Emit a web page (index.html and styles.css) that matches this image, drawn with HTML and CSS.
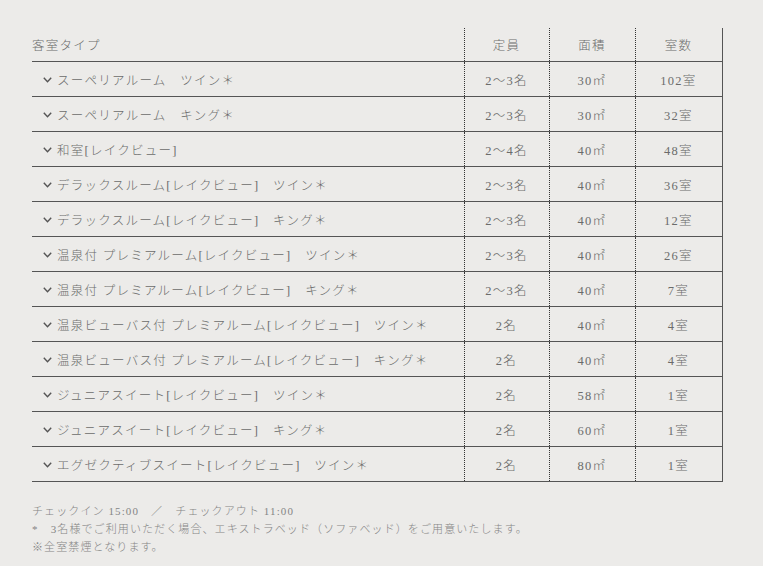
FILE: index.html
```html
<!DOCTYPE html>
<html lang="ja">
<head>
<meta charset="utf-8">
<link rel="stylesheet" href="styles.css">
</head>
<body>
<div class="wrap">
<table class="rooms">
  <colgroup>
    <col class="c-type"><col class="c-cap"><col class="c-area"><col class="c-num">
  </colgroup>
  <thead>
    <tr><th class="th-type">客室タイプ</th><th>定員</th><th>面積</th><th>室数</th></tr>
  </thead>
  <tbody>
    <tr><td class="type"><span class="chev"><svg viewBox="0 0 9 6" width="9" height="6"><path d="M0.8 0.8 L4.5 4.8 L8.2 0.8" fill="none" stroke="#555" stroke-width="1.4"/></svg></span>スーペリアルーム　ツイン＊</td><td>2〜3名</td><td>30㎡</td><td>102室</td></tr>
    <tr><td class="type"><span class="chev"><svg viewBox="0 0 9 6" width="9" height="6"><path d="M0.8 0.8 L4.5 4.8 L8.2 0.8" fill="none" stroke="#555" stroke-width="1.4"/></svg></span>スーペリアルーム　キング＊</td><td>2〜3名</td><td>30㎡</td><td>32室</td></tr>
    <tr><td class="type"><span class="chev"><svg viewBox="0 0 9 6" width="9" height="6"><path d="M0.8 0.8 L4.5 4.8 L8.2 0.8" fill="none" stroke="#555" stroke-width="1.4"/></svg></span>和室[レイクビュー]</td><td>2〜4名</td><td>40㎡</td><td>48室</td></tr>
    <tr><td class="type"><span class="chev"><svg viewBox="0 0 9 6" width="9" height="6"><path d="M0.8 0.8 L4.5 4.8 L8.2 0.8" fill="none" stroke="#555" stroke-width="1.4"/></svg></span>デラックスルーム[レイクビュー]　ツイン＊</td><td>2〜3名</td><td>40㎡</td><td>36室</td></tr>
    <tr><td class="type"><span class="chev"><svg viewBox="0 0 9 6" width="9" height="6"><path d="M0.8 0.8 L4.5 4.8 L8.2 0.8" fill="none" stroke="#555" stroke-width="1.4"/></svg></span>デラックスルーム[レイクビュー]　キング＊</td><td>2〜3名</td><td>40㎡</td><td>12室</td></tr>
    <tr><td class="type"><span class="chev"><svg viewBox="0 0 9 6" width="9" height="6"><path d="M0.8 0.8 L4.5 4.8 L8.2 0.8" fill="none" stroke="#555" stroke-width="1.4"/></svg></span>温泉付 プレミアルーム[レイクビュー]　ツイン＊</td><td>2〜3名</td><td>40㎡</td><td>26室</td></tr>
    <tr><td class="type"><span class="chev"><svg viewBox="0 0 9 6" width="9" height="6"><path d="M0.8 0.8 L4.5 4.8 L8.2 0.8" fill="none" stroke="#555" stroke-width="1.4"/></svg></span>温泉付 プレミアルーム[レイクビュー]　キング＊</td><td>2〜3名</td><td>40㎡</td><td>7室</td></tr>
    <tr><td class="type"><span class="chev"><svg viewBox="0 0 9 6" width="9" height="6"><path d="M0.8 0.8 L4.5 4.8 L8.2 0.8" fill="none" stroke="#555" stroke-width="1.4"/></svg></span>温泉ビューバス付 プレミアルーム[レイクビュー]　ツイン＊</td><td>2名</td><td>40㎡</td><td>4室</td></tr>
    <tr><td class="type"><span class="chev"><svg viewBox="0 0 9 6" width="9" height="6"><path d="M0.8 0.8 L4.5 4.8 L8.2 0.8" fill="none" stroke="#555" stroke-width="1.4"/></svg></span>温泉ビューバス付 プレミアルーム[レイクビュー]　キング＊</td><td>2名</td><td>40㎡</td><td>4室</td></tr>
    <tr><td class="type"><span class="chev"><svg viewBox="0 0 9 6" width="9" height="6"><path d="M0.8 0.8 L4.5 4.8 L8.2 0.8" fill="none" stroke="#555" stroke-width="1.4"/></svg></span>ジュニアスイート[レイクビュー]　ツイン＊</td><td>2名</td><td>58㎡</td><td>1室</td></tr>
    <tr><td class="type"><span class="chev"><svg viewBox="0 0 9 6" width="9" height="6"><path d="M0.8 0.8 L4.5 4.8 L8.2 0.8" fill="none" stroke="#555" stroke-width="1.4"/></svg></span>ジュニアスイート[レイクビュー]　キング＊</td><td>2名</td><td>60㎡</td><td>1室</td></tr>
    <tr><td class="type"><span class="chev"><svg viewBox="0 0 9 6" width="9" height="6"><path d="M0.8 0.8 L4.5 4.8 L8.2 0.8" fill="none" stroke="#555" stroke-width="1.4"/></svg></span>エグゼクティブスイート[レイクビュー]　ツイン＊</td><td>2名</td><td>80㎡</td><td>1室</td></tr>
  </tbody>
</table>
<div class="notes">
  <p>チェックイン 15:00　／　チェックアウト 11:00</p>
  <p>*　3名様でご利用いただく場合、エキストラベッド（ソファベッド）をご用意いたします。</p>
  <p>※全室禁煙となります。</p>
</div>
</div>
</body>
</html>
```

FILE: styles.css
```css
html, body {
  margin: 0;
  padding: 0;
  background: #ecebe9;
}
body {
  font-family: "Liberation Serif", "Noto Sans CJK JP", serif;
  color: #6b6b6b;
}
.wrap {
  padding: 28px 0 0 32px;
}
.rooms {
  border-collapse: collapse;
  table-layout: fixed;
  width: 690px;
  font-size: 12.5px;
  letter-spacing: 0.1em;
  font-weight: 300;
}
.c-type { width: 432px; }
.c-cap { width: 85px; }
.c-area { width: 86px; }
.c-num { width: 87px; }
.rooms th {
  font-weight: 300;
  height: 33px;
  padding: 0;
  text-align: center;
  border-bottom: 1px solid #555;
  border-left: 1px dotted #333;
  vertical-align: middle;
}
.rooms th.th-type {
  text-align: left;
  border-left: none;
}
.rooms td {
  height: 34px;
  padding: 0;
  text-align: center;
  border-bottom: 1px solid #555;
  border-left: 1px dotted #333;
  vertical-align: middle;
}
.rooms th:last-child, .rooms td:last-child {
  border-right: 1px solid #555;
}
.rooms td.type {
  text-align: left;
  border-left: none;
  padding-left: 11px;
}
.chev {
  display: inline-block;
  width: 9px;
  height: 6px;
  margin-right: 5px;
  vertical-align: 2px;
}
.chev svg {
  display: block;
}
.notes {
  margin-top: 20px;
  font-size: 11px;
  letter-spacing: 0.1em;
  line-height: 18px;
  color: #858585;
  font-weight: 300;
}
.notes p {
  margin: 0;
}
```
